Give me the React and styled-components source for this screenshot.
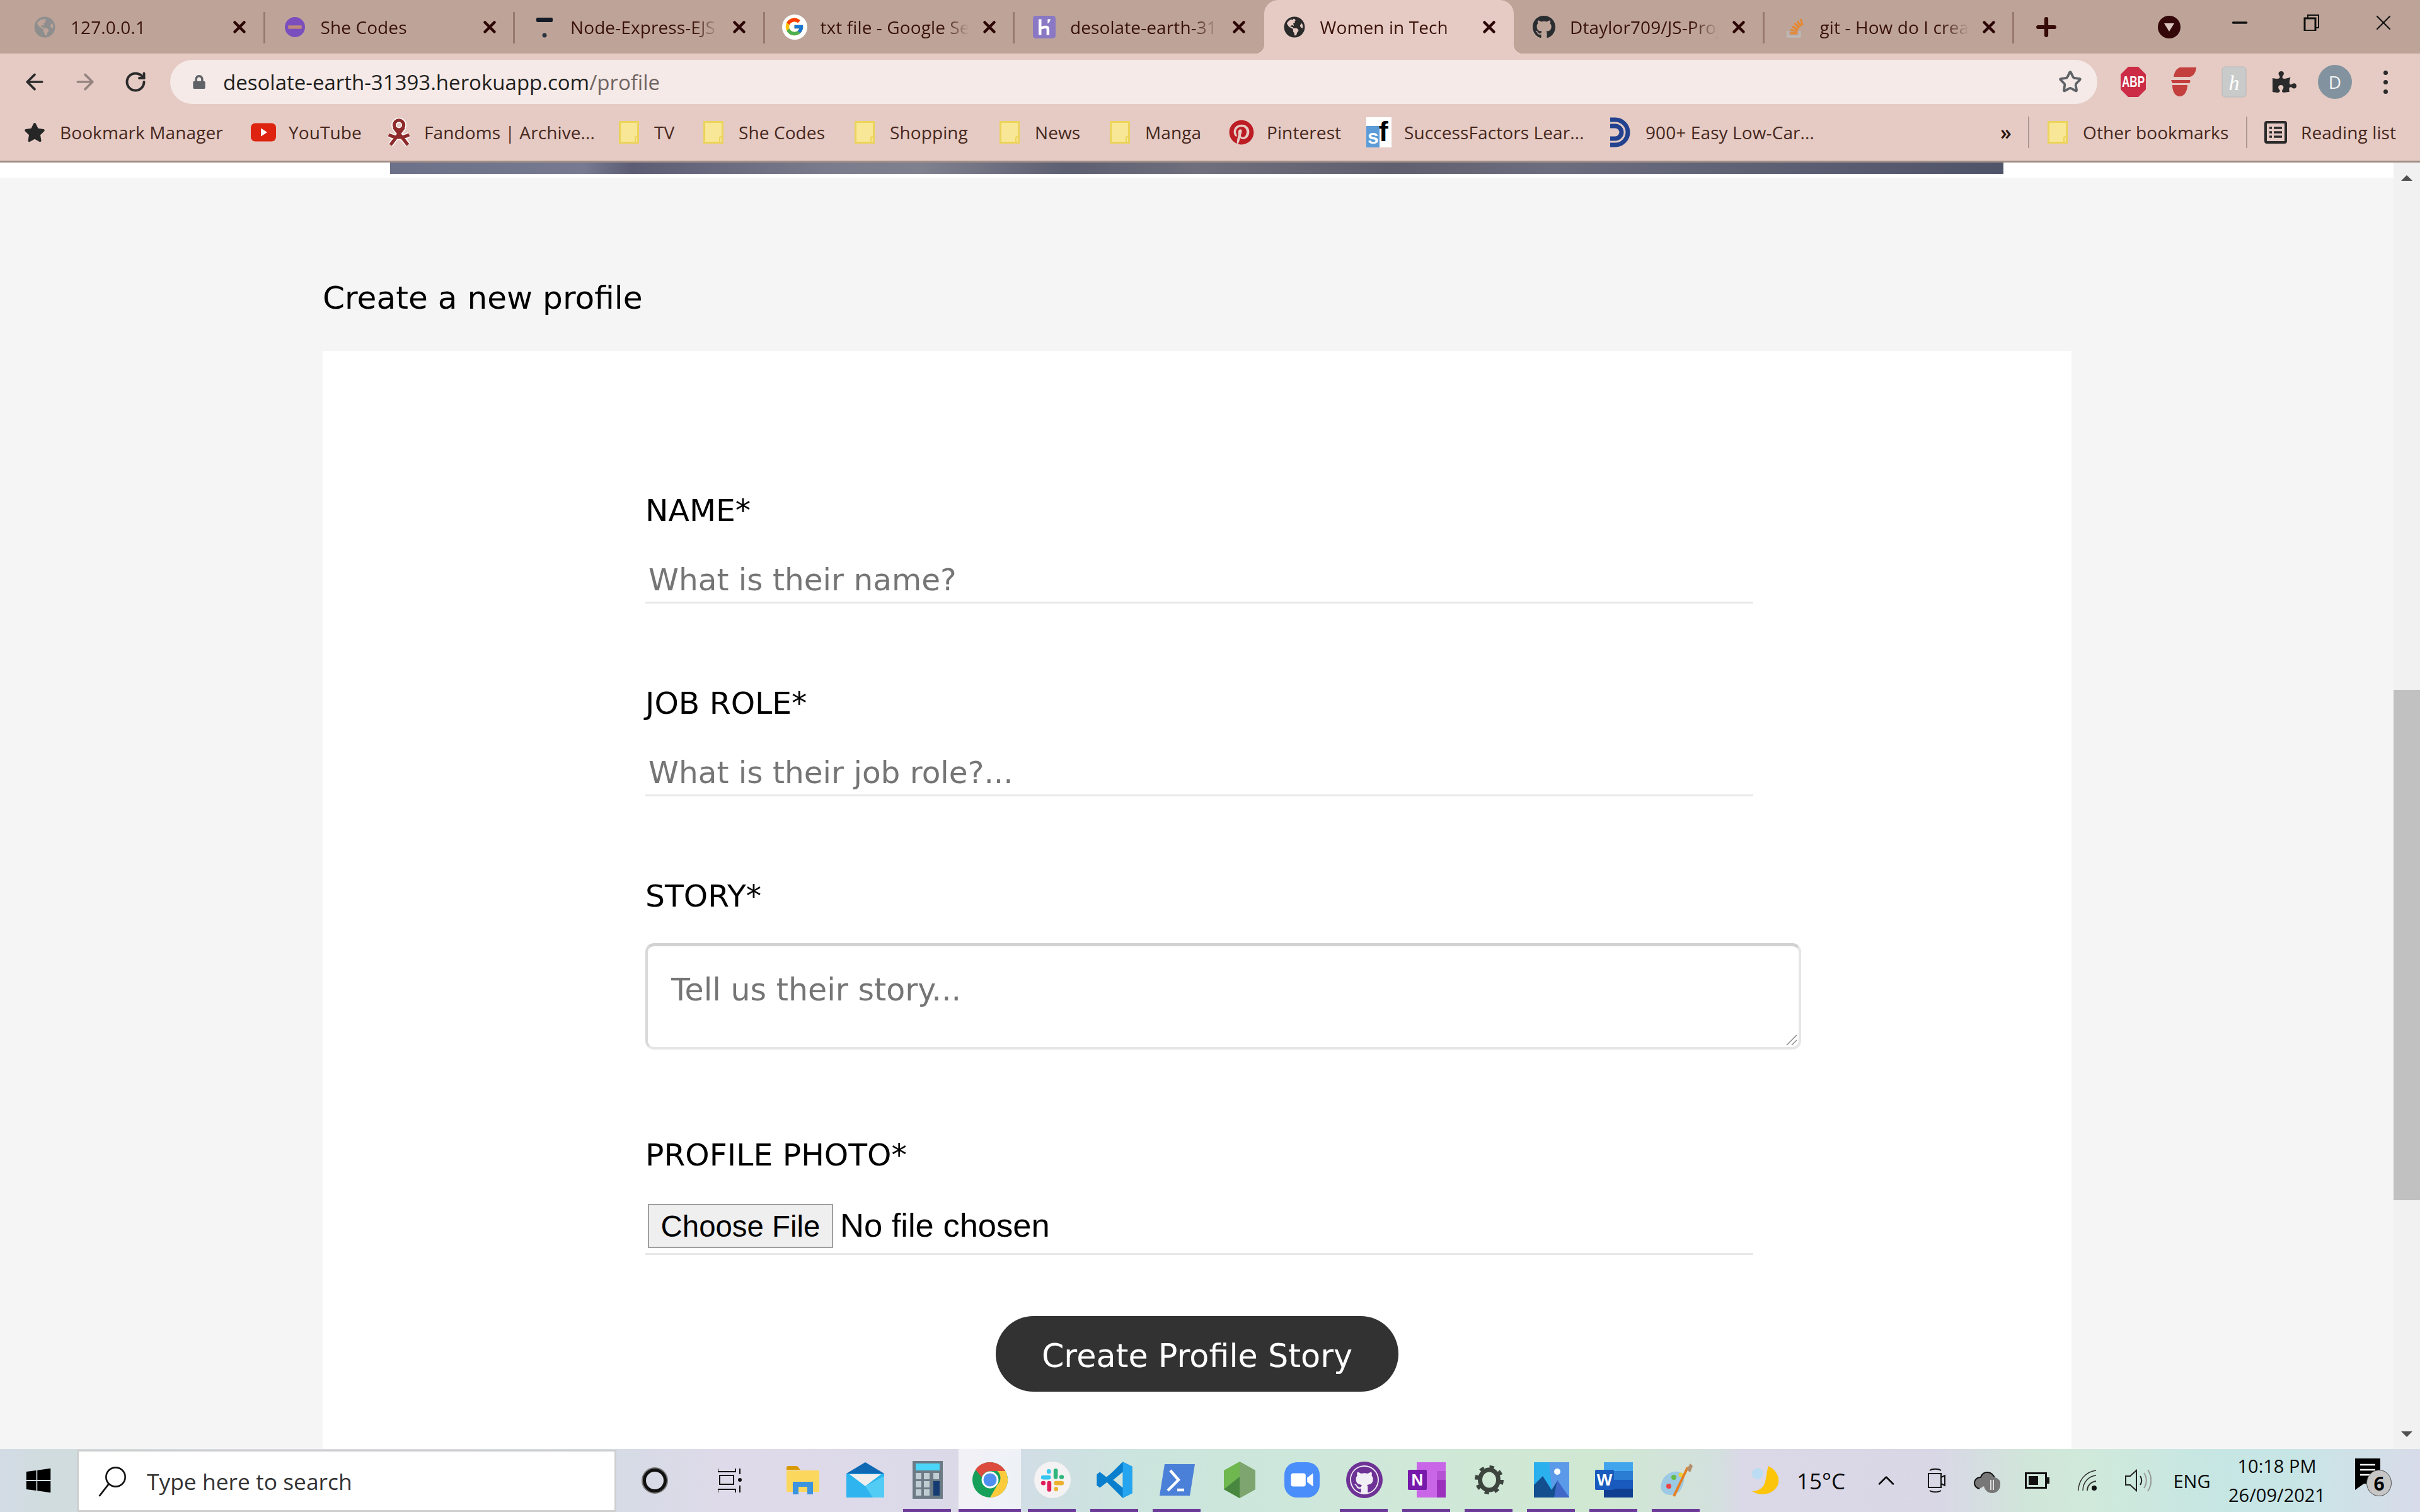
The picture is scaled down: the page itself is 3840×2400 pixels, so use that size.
import React from 'react';
import styled, { createGlobalStyle } from 'styled-components';
import { ArrowLeft, ArrowRight, RotateCw, Star, Plus, X, Minus, ChevronUp } from 'lucide-react';
import { FaGlobeAmericas, FaGithub, FaPinterest, FaWindows, FaPuzzlePiece, FaStar, FaLock } from 'react-icons/fa';
import { FcGoogle } from 'react-icons/fc';

const UI = '"Open Sans", "Liberation Sans", sans-serif';
const PAGE = '"DejaVu Sans", Verdana, sans-serif';

const Global = createGlobalStyle`
  html, body { margin: 0; padding: 0; background: #fff; }
  #root { width: 3840px; height: 2400px; overflow: hidden; }
  * { box-sizing: border-box; }
`;

const Screen = styled.div`
  width: 3840px; height: 2400px; display: flex; flex-direction: column; font-family: ${UI}; overflow: hidden;
`;
const TabStrip = styled.div`
  height: 85px; flex: none; background: #bea498; display: flex; padding-left: 23px; color: #3a1209;
`;
const Tab = styled.div`
  flex: 0 0 396.5px; height: 85px; position: relative; display: flex; align-items: center; padding-left: 30px;
  background: ${p => (p.$active ? '#e5cbc4' : 'transparent')};
  border-radius: ${p => (p.$active ? '22px 22px 0 0' : '0')};
  ${p => p.$sep && `&::after { content: ''; position: absolute; right: -1px; top: 19px; width: 3px; height: 50px; background: #98796d; }`}
  ${p => p.$active && `
    &::before { content: ''; position: absolute; left: -15px; bottom: 0; width: 15px; height: 15px; background: radial-gradient(circle at 0 0, transparent 15px, #e5cbc4 15.5px); }
    &::after { content: ''; position: absolute; right: -15px; bottom: 0; width: 15px; height: 15px; background: radial-gradient(circle at 100% 0, transparent 15px, #e5cbc4 15.5px); }
  `}
`;
const TabIcon = styled.span`
  width: 36px; height: 36px; flex: none; display: flex; align-items: center; justify-content: center;
`;
const TabTitle = styled.span`
  margin-left: 23px; width: 236px; font-size: 28px; white-space: nowrap; overflow: hidden; flex: none; line-height: 40px; letter-spacing: 0.1px;
  mask-image: linear-gradient(to right, #000 82%, transparent 100%);
`;
const TabClose = styled(X)`
  position: absolute; left: 342px; top: 28px; width: 30px; height: 30px; stroke-width: 3.6; color: #2c0505;
`;
const GoogleDisc = styled.span`
  width: 40px; height: 40px; flex: none; border-radius: 50%; background: #fff; display: flex; align-items: center; justify-content: center;
`;
const NewTab = styled.span`
  margin-left: 30px; width: 44px; height: 85px; display: flex; align-items: center; justify-content: center; color: #360a06;
`;
const StripSpacer = styled.span` width: 155px; flex: none; `;
const ProfileDot = styled.span`
  width: 36px; height: 36px; flex: none; margin-top: 25px; border-radius: 50%; background: #340808; display: flex; align-items: center; justify-content: center;
  &::after { content: ''; border-left: 8px solid transparent; border-right: 8px solid transparent; border-top: 13px solid #d9c6bf; }
`;
const WinButtons = styled.div` display: flex; margin-left: 37px; height: 72px; align-items: center; color: #111; `;
const WinButton = styled.span` width: 114px; display: flex; justify-content: center; `;

const Toolbar = styled.div`
  height: 80px; flex: none; background: #e5cbc4; display: flex; padding: 10px 0 0 15px; color: #222;
`;
const NavButton = styled.span`
  width: 80px; height: 70px; display: flex; align-items: center; justify-content: center; color: ${p => p.$dim ? '#958480' : '#2a2a2a'}; flex: none;
`;
const Omnibox = styled.div`
  width: 3058px; margin-left: 15px; height: 70px; background: #f5eae7; border-radius: 35px; display: flex; align-items: center; padding-left: 35px; flex: none;
`;
const Url = styled.span`
  margin-left: 27px; font-size: 33px; color: #1f1f1f; white-space: nowrap;
  em { font-style: normal; color: #6f6463; }
`;
const OmniStar = styled.span` margin-left: auto; margin-right: 24px; display: flex; color: #5f6368; `;
const ExtRow = styled.div` display: flex; margin-left: 17px; `;
const ExtButton = styled.span` width: 80px; height: 70px; display: flex; align-items: center; justify-content: center; flex: none; `;
const Avatar = styled.span`
  width: 54px; height: 54px; border-radius: 50%; background: #82939f; color: #f3f3f3; font-size: 28px; display: flex; align-items: center; justify-content: center;
`;
const Dots = styled.span` display: flex; flex-direction: column; gap: 8px;
  i { width: 7px; height: 7px; border-radius: 50%; background: #2a2a2a; display: block; }
`;

const BookmarkBar = styled.div`
  height: 90px; flex: none; background: #e5cbc4; display: flex; align-items: center; padding-left: 35px; border: 0;
`;
const Bookmark = styled.div`
  flex: 0 0 ${p => p.$w}px; display: flex; align-items: center; gap: 20px; font-size: 28px; color: #472820; white-space: nowrap; letter-spacing: 0.1px;
`;
const BookmarkIcon = styled.span` width: 40px; height: 48px; flex: none; display: flex; align-items: center; justify-content: center; `;
const BarSpacer = styled.span` flex: 1; `;
const Chevrons = styled.span` width: 40px; text-align: center; font-size: 32px; color: #2a1510; margin-right: 15px; line-height: 40px; font-weight: 600; `;
const BarSep = styled.span` width: 2px; height: 50px; background: #ac9791; flex: none; margin-right: ${p => p.$mr}px; `;
const ChromeEdge = styled.div` height: 3px; flex: none; background: #a08e88; `;

const Viewport = styled.div` flex: 1; display: flex; min-height: 0; `;
const Page = styled.main` flex: 1; display: flex; flex-direction: column; background: #f5f5f5; min-width: 0; font-family: ${PAGE}; `;
const HeaderBand = styled.div` height: 24px; flex: none; background: #fff; display: flex; justify-content: center; `;
const HeroStrip = styled.div`
  width: 2560px; height: 18px;
  background: linear-gradient(90deg, #6c7189 0%, #777a90 12%, #5c5d74 15%, #7a7b8c 27%, #80818f 33%, #5d5f72 42%, #6f6f7d 50%, #605f6f 62%, #6c6d7f 72%, #5e6074 85%, #505469 100%);
`;
const Heading = styled.h1`
  margin: 0 0 0 512px; padding-top: 156px; height: 275px; font-size: 50.2px; font-weight: 400; line-height: 70px; color: #000;
`;
const Card = styled.section` margin-left: 512px; width: 2775px; flex: 1; background: #fff; padding-top: 224px; overflow: hidden; `;
const Field = styled.div` margin-left: 512px; margin-bottom: ${p => p.$mb}px; `;
const Label = styled.label` display: block; font-size: 48.8px; line-height: 60px; color: #000; margin-bottom: 44px; `;
const TextInput = styled.input`
  display: block; width: 1758px; height: 73px; border: 0; border-bottom: 3px solid #e8e8e8; outline: 0; padding: 0 0 0 5px; background: #fff;
  font-family: ${PAGE}; font-size: 48.5px; color: #000;
  &::placeholder { color: #757575; opacity: 1; }
`;
const StoryBox = styled.div` position: relative; width: 1834px; height: 169px; `;
const StoryArea = styled.textarea`
  display: block; width: 100%; height: 100%; resize: none; outline: 0; overflow: hidden; padding: 41px 36px 40px 37px;
  border: 4px solid #e6e6e6; border-top: 5px solid #d2d2d2; border-left-color: #d9d9d9; border-radius: 14px; background: #fff;
  font-family: ${PAGE}; font-size: 49px; color: #000;
  &::placeholder { color: #757575; opacity: 1; }
`;
const ResizeGrip = styled.svg` position: absolute; right: 6px; bottom: 6px; width: 20px; height: 20px; `;
const FileRow = styled.div` width: 1758px; height: 84px; border-bottom: 3px solid #e8e8e8; padding: 3px 0 0 4px; `;
const FileInput = styled.input`
  font-family: "Liberation Sans", Arial, sans-serif; font-size: 52.5px; color: #000; width: 1400px; height: 70px; display: block; padding: 0;
  &::file-selector-button {
    font-family: "Liberation Sans", Arial, sans-serif; font-size: 47.4px; width: 294px; height: 70px; margin: 0 11px 0 0; padding: 0;
    background: #efefef; border: 2px solid #a0a0a0; border-radius: 0; color: #000;
  }
`;
const SubmitRow = styled.div` display: flex; justify-content: center; margin-top: 97px; `;
const Submit = styled.button`
  width: 639px; height: 120px; border: 0; border-radius: 60px; background: #323232; color: #fff; font-family: ${PAGE}; font-size: 50.8px; padding: 6px 0 0;
`;

const Scrollbar = styled.aside` width: 42px; flex: none; background: #f1f1f1; display: flex; flex-direction: column; align-items: stretch; `;
const ScrollArrow = styled.div`
  height: 48px; flex: none; display: flex; align-items: center; justify-content: center; margin-top: ${p => p.$auto ? 'auto' : '0'};
  &::after { content: ''; border-left: 9px solid transparent; border-right: 9px solid transparent; ${p => p.$down ? 'border-top: 9px solid #505050;' : 'border-bottom: 9px solid #505050;'} }
`;
const ScrollThumb = styled.div` height: 810px; flex: none; margin-top: 789px; background: #c1c1c1; `;

const Taskbar = styled.footer`
  height: 100px; flex: none; display: flex; align-items: stretch; color: #0a0a0a;
  background: linear-gradient(90deg, #d3dce6 0%, #d0dcdd 2%, #dadbe8 12%, #d8dde8 20%, #d6dbe6 26%, #dfdae9 30%, #dbd9e8 40%, #d2dde6 42%, #cbe5de 47%, #cfe8d8 58%, #d0e8d2 66%, #d3e0de 71%, #dbd8e7 72%, #d9d7e6 80%, #d0e6d9 84%, #d0e9da 86%, #c6e6e4 92%, #c8e5e6 95%, #d8dbe9 100%);
`;
const StartBtn = styled.div` width: 122px; flex: none; display: flex; align-items: center; justify-content: center; `;
const SearchBox = styled.div`
  width: 856px; flex: none; background: #fff; border: 3px solid #cfcfcf; margin: 0; display: flex; align-items: center; font-size: 35.4px; color: #333; padding-left: 26px; margin-top: 1px;
`;
const SearchText = styled.span` margin-left: 30px; `;
const Slot = styled.div` width: ${p => p.$w}px; flex: none; display: flex; align-items: center; justify-content: center; `;
const Ring = styled.span` width: 40px; height: 40px; border-radius: 50%; border: 6px solid #111; outline: 2px solid #777; outline-offset: -1px; display: block; `;
const Apps = styled.div` display: flex; margin-left: 6px; `;
const AppCell = styled.div`
  width: 99px; position: relative; display: flex; align-items: center; justify-content: center; padding-bottom: 3px;
  background: ${p => p.$active ? 'rgba(255,255,255,.62)' : 'transparent'};
  ${p => p.$run && `&::after { content: ''; position: absolute; bottom: 0; left: ${p.$active ? 0 : 11}px; right: ${p.$active ? 0 : 12}px; height: 5px; background: #6c3a99; }`}
`;
const Tray = styled.div` display: flex; margin-left: 60px; align-items: center; `;
const TrayIcon = styled.div` width: ${p => p.$w || 80}px; height: 100px; flex: none; display: flex; align-items: center; justify-content: center; font-size: ${p => p.$fs || 32}px; `;
const Temp = styled.div` width: 102px; margin-left: 22px; flex: none; font-size: 35px; `;
const Clock = styled.div` width: 180px; flex: none; height: 100px; display: flex; flex-direction: column; align-items: center; justify-content: center; font-size: 29px; line-height: 46px; `;
const NoteWrap = styled.div` position: relative; width: 60px; height: 70px; margin-left: 34px; `;
const NoteBadge = styled.span`
  position: absolute; left: 18px; top: 18px; width: 40px; height: 42px; border-radius: 50%; background: #c6c6c6; border: 1px solid #555; color: #000; font-size: 30px; font-weight: 700; display: flex; align-items: center; justify-content: center;
`;

const S = ({ w, h = w, vb = '0 0 24 24', children }) => <svg width={w} height={h} viewBox={vb}>{children}</svg>;

const Folder = () => (
  <S w={32} h={36} vb="0 0 32 36"><path d="M1.500 1.500H30.500V34.500H1.500Z" fill="#f7e796" stroke="#ecd35a" strokeWidth="3" /><path d="M26 34V27a2 2 0 014 0v7" fill="none" stroke="#ecd35a" strokeWidth="2" /></S>
);
const SheCodes = () => (
  <S w={32}><circle cx="12" cy="12" r="12" fill="#7a4fbd" /><rect x="4" y="10" width="16" height="4" fill="#c08a78" /></S>
);
const NodeExpress = () => (
  <S w={30} h={36} vb="0 0 30 36"><rect x="2" y="3" width="26" height="7" rx="2" fill="#141b26" /><circle cx="15" cy="31" r="3.500" fill="#2a3340" /></S>
);
const HerokuTile = () => (
  <S w={40} vb="0 0 40 40">
    <rect width="40" height="40" rx="5" fill="#8a78c4" />
    <path d="M10 6h5v13c4-1.500 8-2 11-1 2 1 3 3 3 5v11h-5V23c-2-1-6 0-9 1v10h-5Z" fill="#fff" />
    <path d="M26 6h5c-.5 3-2 6-5 8Z" fill="#fff" />
  </S>
);
const SO = ({ size = 36 }) => (
  <S w={size}>
    <path d="M5 16v6h13v-6" fill="none" stroke="#bcbbbb" strokeWidth="2" />
    <g stroke="#e8862c" strokeWidth="2"><path d="M8 18.500h7M8.500 15l7 1.200M9.800 11.400l6.400 3M12.200 8l5.400 4.500M15.200 5.500l4 5.600M18.800 3.500l2 6.600" /></g>
  </S>
);
const AO3 = () => (
  <S w={42} h={50} vb="0 0 42 50">
    <g fill="none" stroke="#fff" strokeWidth="9"><circle cx="21" cy="13" r="8" /><path d="M7 46L29 17M36 46L13 17M4 29c12 6 22 6 34 0" /></g>
    <g fill="none" stroke="#8e2a2a" strokeWidth="5.500"><circle cx="21" cy="13" r="8" /><path d="M7 46L29 17M36 46L13 17M4 29c12 6 22 6 34 0" /></g>
  </S>
);
const YT = () => (
  <S w={40} h={30} vb="0 0 40 30"><rect width="40" height="29" y=".5" rx="7" fill="#de2411" /><path d="M16 8.500L26 15 16 21.500Z" fill="#fff" /></S>
);
const SF = () => (
  <S w={40} h={48} vb="0 0 40 48">
    <rect width="40" height="48" fill="#fff" /><rect y="14" width="21" height="34" fill="#5a9bd8" />
    <text x="2" y="42" fontSize="32" fontWeight="700" fill="#fff" fontFamily="Liberation Sans">s</text>
    <text x="20" y="38" fontSize="44" fontWeight="700" fill="#000" fontFamily="Liberation Sans">f</text>
  </S>
);
const DD = () => (
  <S w={32} h={48} vb="0 0 32 48">
    <path d="M0 4H8a20 20 0 010 40H0" fill="none" stroke="#22418f" strokeWidth="7" /><path d="M0 14H8a10 10 0 010 20H0" fill="none" stroke="#22418f" strokeWidth="7" /></S>
);
const ABP = () => (
  <S w={40} h={50} vb="0 0 40 50">
    <path d="M12 1h16l12 12v24L28 49H12L0 37V13Z" fill="#cc2c46" />
    <text x="20" y="33" textAnchor="middle" fontSize="24" fontWeight="700" fill="#fff" fontFamily="Liberation Sans" textLength="36" lengthAdjust="spacingAndGlyphs">ABP</text>
  </S>
);
const Express = () => (
  <S w={40} h={46} vb="0 0 40 46">
    <path d="M14 0h26c0 6-4 14-10 15H4C5 8 8 2 14 0Z" fill="#c4403f" /><path d="M0 20h30c1 2 0 4-1 5H2Z" fill="#c4403f" /><path d="M2 28h24c0 8-4 18-12 18C6 46 2 38 2 28Z" fill="#c4403f" />
  </S>
);
const HExt = () => (
  <S w={40} h={50} vb="0 0 40 50">
    <rect x="1" y="1" width="38" height="48" rx="5" fill="#c9cbcb" stroke="#b8b8b8" />
    <text x="20" y="38" textAnchor="middle" fontSize="34" fontStyle="italic" fill="#fff" fontFamily="Liberation Serif">h</text>
  </S>
);
const RestoreIcon = () => (
  <S w={26} vb="0 0 26 26"><path d="M7 6V1h17v20h-5" fill="none" stroke="#111" strokeWidth="2" /><rect x="2" y="6" width="17" height="20" fill="none" stroke="#111" strokeWidth="3" /></S>
);
const ReadingList = () => (
  <S w={36} h={36} vb="0 0 36 36"><rect x="2" y="2" width="32" height="32" rx="2" fill="none" stroke="#2a2a2a" strokeWidth="4" /><path d="M8 11h4M15 11h13M8 18h4M15 18h13M8 25h4M15 25h13" stroke="#2a2a2a" strokeWidth="3.500" /></S>
);
const TaskView = () => (
  <S w={40} h={40} vb="0 0 40 40"><g fill="none" stroke="#111" strokeWidth="2"><path d="M0 1v5h28V1M3 12h22v14H3ZM0 39v-5h28v5" /><path d="M35 1v9M35 28v11" /></g><circle cx="35" cy="19" r="3" fill="#111" /></S>
);
const Explorer = () => (
  <S w={52} h={46} vb="0 0 52 46"><path d="M0 4a3 3 0 013-3h14l5 6h-22Z" fill="#d99a00" /><path d="M0 8h52v34H0Z" fill="#fcd75d" /><path d="M10 46V26h32v20h-9V34H19v12Z" fill="#3c94e0" /></S>
);
const Mail = () => (
  <S w={60} h={56} vb="0 0 60 56"><path d="M0 18L30 0 60 18v6H0Z" fill="#0f68b4" /><path d="M0 18h60v38H0Z" fill="#29b6f0" /><path d="M0 22L30 40 60 22V56H0Z" fill="#2fb4ef" /><path d="M5 19h50L30 38Z" fill="#f1eeee" /><path d="M30 38L60 22V56H42Z" fill="#53ccf5" /></S>
);
const Calc = () => (
  <S w={48} h={60} vb="0 0 48 60">
    <rect width="48" height="60" fill="#6b7a84" /><rect x="5" y="4" width="38" height="11" fill="#4ad6f9" />
    {[19, 32, 45].map(y => [5, 18, 33].map(x => (x === 33 && y > 19 ? null : <rect key={x + '-' + y} x={x} y={y} width="9" height="10" fill="#c0ced3" />)))}
    <rect x="33" y="32" width="10" height="23" fill="#143c72" />
  </S>
);
const ChromeIcon = () => (
  <S w={56} vb="0 0 48 48">
    <circle cx="24" cy="24" r="24" fill="#16a05a" />
    <path d="M24 0a24 24 0 0120.800 12H24a12 12 0 00-11.400 8.400L4.200 10A24 24 0 0124 0Z" fill="#dc4b3e" />
    <path d="M44.800 12A24 24 0 0124 48l10.400-18a12 12 0 00-.6-18Z" fill="#fbcb3b" />
    <circle cx="24" cy="24" r="11.500" fill="#fff" /><circle cx="24" cy="24" r="9" fill="#4f8ff0" />
  </S>
);
const Slack = () => (
  <S w={58} vb="0 0 48 48">
    <circle cx="24" cy="24" r="24" fill="#f4f2f2" />
    <rect x="9" y="18" width="13" height="5.500" rx="2.750" fill="#36c5f0" /><rect x="16.500" y="10" width="5.500" height="6" rx="2.750" fill="#36c5f0" />
    <rect x="25.500" y="9" width="5.500" height="14" rx="2.750" fill="#2eb67d" /><rect x="33" y="17.500" width="6" height="5.500" rx="2.750" fill="#2eb67d" />
    <rect x="26" y="25.500" width="13" height="5.500" rx="2.750" fill="#ecb22e" /><rect x="26" y="33" width="5.500" height="6" rx="2.750" fill="#ecb22e" />
    <rect x="17" y="25.500" width="5.500" height="14" rx="2.750" fill="#e01e5a" /><rect x="9" y="25.500" width="6" height="5.500" rx="2.750" fill="#e01e5a" />
  </S>
);
const VSCode = () => (
  <S w={60} vb="0 0 48 48">
    <path d="M34 1l12 6v34l-12 6-20-20-9 7-4-3v-14l4-3 9 7Z" fill="#0a7fce" /><path d="M34 1l12 6v34l-12 6Z" fill="#25a5ef" /><path d="M14 27l20-14v-9L5 27Z" fill="#0a7fce" /><path d="M34 14L22 24l12 10Z" fill="#cfe5dd" />
  </S>
);
const PS = () => (
  <S w={56} h={50} vb="0 0 56 50"><path d="M8 0h48l-8 50H0Z" fill="#4a80d8" /><path d="M17 10l13 15-17 17" fill="none" stroke="#fff" strokeWidth="4.500" /><path d="M28 41h11" stroke="#fff" strokeWidth="4.500" /></S>
);
const NodeIcon = () => (
  <S w={50} h={58} vb="0 0 50 58"><path d="M25 0L50 14v30L25 58 0 44V14Z" fill="#6fb74f" /><path d="M25 0L50 14v30L25 58Z" fill="#7ea56f" /><path d="M0 44l25-20v34Z" fill="#47873f" /></S>
);
const ZoomIcon = () => (
  <S w={56} vb="0 0 48 48"><rect width="48" height="48" rx="17" fill="#4a8efc" /><rect x="9" y="15" width="20" height="18" rx="3" fill="#fff" /><path d="M31 21l8-6v18l-8-6Z" fill="#fff" /></S>
);
const GHub = () => (
  <S w={58} vb="0 0 48 48">
    <circle cx="24" cy="24" r="24" fill="#6e3296" /><circle cx="24" cy="24" r="19" fill="#f2eef5" />
    <g transform="translate(6 6) scale(1.500)"><FaGithub size={24} color="#6e3296" /></g>
  </S>
);
const OneNote = () => (
  <S w={60} h={56} vb="0 0 60 56">
    <rect x="14" width="46" height="56" fill="#c966e8" /><rect x="46" y="14" width="14" height="42" fill="#9b30bd" /><rect x="46" y="14" width="14" height="14" fill="#b552d4" />
    <rect y="12" width="30" height="32" rx="2" fill="#7719aa" /><text x="15" y="37" textAnchor="middle" fontSize="26" fontWeight="700" fill="#fff" fontFamily="Liberation Sans">N</text>
  </S>
);
const Gear = () => (
  <S w={48} h={52} vb="0 0 48 52">
    <ellipse cx="24" cy="26" rx="14.500" ry="16" fill="none" stroke="#3d453f" strokeWidth="7" />
    <circle cx="24" cy="26" r="20" fill="none" stroke="#3d453f" strokeWidth="6" strokeDasharray="7 8.700" />
  </S>
);
const Photos = () => (
  <S w={56} vb="0 0 56 56"><rect width="56" height="56" fill="#2bb0ee" /><path d="M24 0h32v56H30Z" fill="#5b9ae8" /><circle cx="37" cy="15" r="5" fill="#fff" /><path d="M0 56V36L14 22l14 22 9-14 19 26Z" fill="#134f8e" /><path d="M37 28l19 28H32Z" fill="#4068c8" /></S>
);
const Word = () => (
  <S w={60} h={56} vb="0 0 60 56">
    <rect x="14" width="46" height="14" fill="#41a5ee" /><rect x="14" y="14" width="46" height="14" fill="#2b7cd3" /><rect x="14" y="28" width="46" height="14" fill="#185abd" /><rect x="14" y="42" width="46" height="14" fill="#103f91" />
    <rect y="12" width="30" height="32" rx="2" fill="#185abd" /><text x="15" y="37" textAnchor="middle" fontSize="26" fontWeight="700" fill="#fff" fontFamily="Liberation Sans">W</text>
  </S>
);
const Paint = () => (
  <S w={56} h={56} vb="0 0 56 56">
    <path d="M4 34c4-16 20-22 30-18 8 4 8 14 2 26-6 10-18 12-26 8C4 46 2 40 4 34Z" fill="#9cc9e4" />
    <circle cx="16" cy="38" r="4" fill="#e44" /><circle cx="24" cy="24" r="4" fill="#6b4" /><circle cx="35" cy="20" r="3.500" fill="#ec3" />
    <path d="M24 54L46 8" stroke="#e77d1f" strokeWidth="4" /><path d="M44 12l6-10 4 4-4 10Z" fill="#b58f6b" />
  </S>
);
const Moon = () => (
  <S w={50} h={46} vb="0 0 50 46"><path d="M32 0c14 6 20 22 14 32-7 13-26 17-40 8 9 0 17-4 20-12 3-9 3-19 6-28Z" fill="#fdc50a" /><ellipse cx="15" cy="12" rx="9" ry="9" fill="#bcdcf4" /></S>
);
const Meet = () => (
  <S w={30} h={40} vb="0 0 30 40"><g fill="none" stroke="#111" strokeWidth="2"><path d="M4 4c4-3 14-3 18 0M4 36c4 3 14 3 18 0" /><rect x="2" y="9" width="20" height="22" /><path d="M22 15l6-3v16l-6-3" /></g></S>
);
const Cloud = () => (
  <S w={44} h={42} vb="0 0 44 42"><path d="M10 34a9 9 0 012-18c3-12 20-10 22 2 4 0 8 3 8 8H24" fill="#777" stroke="#111" strokeWidth="2" /><circle cx="30" cy="28" r="13" fill="#777" /><path d="M28 20v16M32 20v16" stroke="#fff" strokeWidth="1.500" /></S>
);
const Battery = () => (
  <S w={40} h={26} vb="0 0 40 26"><rect x="1.500" y="1.500" width="32" height="23" fill="none" stroke="#111" strokeWidth="3" /><rect x="6" y="6" width="15" height="14" fill="#111" /><rect x="35" y="8" width="4" height="10" fill="#111" /></S>
);
const Wifi = () => (
  <S w={34} h={34} vb="0 0 34 34"><g fill="none"><path d="M2 33C2 16 14 3 30 1M9 33C9 20 18 10 30 9" stroke="#333" strokeWidth="1.500" /><path d="M16 33c0-8 6-14 14-15" stroke="#333" strokeWidth="2" /></g><circle cx="27" cy="29" r="4" fill="#111" /></S>
);
const Speaker = () => (
  <S w={42} h={40} vb="0 0 42 40"><path d="M1 13h7l10-9v32L8 27H1Z" fill="none" stroke="#222" strokeWidth="2" /><path d="M24 13c3 4 3 10 0 14" fill="none" stroke="#222" strokeWidth="2" /><path d="M30 8c5 7 5 17 0 24M36 3c7 10 7 24 0 34" fill="none" stroke="#999" strokeWidth="2" /></S>
);

const tabs = [
  { t: '127.0.0.1', i: <FaGlobeAmericas size={34} color="#8e8e8e" />, sep: 1 },
  { t: 'She Codes', i: <SheCodes />, sep: 1 },
  { t: 'Node-Express-EJS', i: <NodeExpress />, sep: 1 },
  { t: 'txt file - Google Search', i: <GoogleDisc><FcGoogle size={33} /></GoogleDisc>, sep: 1 },
  { t: 'desolate-earth-31393', i: <HerokuTile /> },
  { t: 'Women in Tech', i: <FaGlobeAmericas size={34} color="#2a2a2a" />, active: 1 },
  { t: 'Dtaylor709/JS-Project', i: <FaGithub size={40} color="#2a2d30" />, sep: 1 },
  { t: 'git - How do I create', i: <SO />, sep: 1 },
];

const marks = [
  ['Bookmark Manager', <FaStar size={34} color="#262626" />, 363],
  ['YouTube', <YT />, 215],
  ['Fandoms | Archive...', <AO3 />, 365],
  ['TV', <Folder />, 134],
  ['She Codes', <Folder />, 240],
  ['Shopping', <Folder />, 230],
  ['News', <Folder />, 175],
  ['Manga', <Folder />, 193],
  ['Pinterest', <FaPinterest size={40} color="#bd1c24" />, 218],
  ['SuccessFactors Lear...', <SF />, 383],
  ['900+ Easy Low-Car...', <DD />, 360],
];

const apps = [
  [<Explorer />, 0], [<Mail />, 0], [<Calc />, 1], [<ChromeIcon />, 1, 1], [<Slack />, 1], [<VSCode />, 1], [<PS />, 1],
  [<NodeIcon />, 0], [<ZoomIcon />, 0], [<GHub />, 1], [<OneNote />, 1], [<Gear />, 1], [<Photos />, 1], [<Word />, 1], [<Paint />, 1],
];

export default function App() {
  return (
    <Screen>
      <Global />
      <TabStrip>
        {tabs.map(x => (
          <Tab key={x.t} $sep={x.sep} $active={x.active}>
            <TabIcon>{x.i}</TabIcon>
            <TabTitle>{x.t}</TabTitle>
            <TabClose />
          </Tab>
        ))}
        <NewTab><Plus size={46} strokeWidth={3.4} /></NewTab>
        <StripSpacer />
        <ProfileDot />
        <WinButtons>
          <WinButton><Minus size={36} strokeWidth={2.4} /></WinButton>
          <WinButton><RestoreIcon /></WinButton>
          <WinButton><X size={40} strokeWidth={1.3} /></WinButton>
        </WinButtons>
      </TabStrip>
      <Toolbar>
        <NavButton><ArrowLeft size={40} strokeWidth={2.2} /></NavButton>
        <NavButton $dim><ArrowRight size={40} strokeWidth={2.2} /></NavButton>
        <NavButton><RotateCw size={36} strokeWidth={2.6} /></NavButton>
        <Omnibox>
          <FaLock size={22} color="#5f6368" />
          <Url>desolate-earth-31393.herokuapp.com<em>/profile</em></Url>
          <OmniStar><Star size={38} strokeWidth={2.4} /></OmniStar>
        </Omnibox>
        <ExtRow>
          <ExtButton><ABP /></ExtButton>
          <ExtButton><Express /></ExtButton>
          <ExtButton><HExt /></ExtButton>
          <ExtButton><FaPuzzlePiece size={38} color="#2a2a2a" /></ExtButton>
          <ExtButton><Avatar>D</Avatar></ExtButton>
          <ExtButton><Dots><i /><i /><i /></Dots></ExtButton>
        </ExtRow>
      </Toolbar>
      <BookmarkBar>
        {marks.map(([t, icon, w]) => (
          <Bookmark key={t} $w={w}><BookmarkIcon>{icon}</BookmarkIcon>{t}</Bookmark>
        ))}
        <BarSpacer />
        <Chevrons>»</Chevrons>
        <BarSep $mr={25} />
        <Bookmark $w={319}><BookmarkIcon><Folder /></BookmarkIcon>Other bookmarks</Bookmark>
        <BarSep $mr={25} />
        <Bookmark $w={249}><BookmarkIcon><ReadingList /></BookmarkIcon>Reading list</Bookmark>
      </BookmarkBar>
      <ChromeEdge />
      <Viewport>
        <Page>
          <HeaderBand><HeroStrip /></HeaderBand>
          <Heading>Create a new profile</Heading>
          <Card>
            <Field $mb={129}>
              <Label>NAME*</Label>
              <TextInput placeholder="What is their name?" />
            </Field>
            <Field $mb={129}>
              <Label>JOB ROLE*</Label>
              <TextInput placeholder="What is their job role?..." />
            </Field>
            <Field $mb={138}>
              <Label>STORY*</Label>
              <StoryBox>
                <StoryArea placeholder="Tell us their story..." />
                <ResizeGrip viewBox="0 0 20 20"><path d="M19 3L3 19M19 11l-8 8" stroke="#8a8a8a" strokeWidth="1.5" /></ResizeGrip>
              </StoryBox>
            </Field>
            <Field $mb={0}>
              <Label>PROFILE PHOTO*</Label>
              <FileRow><FileInput type="file" /></FileRow>
            </Field>
            <SubmitRow><Submit type="button">Create Profile Story</Submit></SubmitRow>
          </Card>
        </Page>
        <Scrollbar>
          <ScrollArrow />
          <ScrollThumb />
          <ScrollArrow $down $auto />
        </Scrollbar>
      </Viewport>
      <Taskbar>
        <StartBtn><FaWindows size={44} color="#000" /></StartBtn>
        <SearchBox>
          <svg width="52" height="52" viewBox="0 0 24 24" fill="none" stroke="#111" strokeWidth="1.2"><circle cx="15" cy="9" r="7" /><path d="M10 14L3 23" /></svg>
          <SearchText>Type here to search</SearchText>
        </SearchBox>
        <Slot $w={122}><Ring /></Slot>
        <Slot $w={118}><TaskView /></Slot>
        <Apps>
          {apps.map(([icon, run, active], i) => (
            <AppCell key={i} $run={run} $active={active}>{icon}</AppCell>
          ))}
        </Apps>
        <Tray>
          <TrayIcon $w={60}><Moon /></TrayIcon>
          <Temp>15°C</Temp>
          <TrayIcon><ChevronUp size={44} strokeWidth={1.4} /></TrayIcon>
          <TrayIcon><Meet /></TrayIcon>
          <TrayIcon><Cloud /></TrayIcon>
          <TrayIcon><Battery /></TrayIcon>
          <TrayIcon><Wifi /></TrayIcon>
          <TrayIcon><Speaker /></TrayIcon>
          <TrayIcon $w={90} $fs={29}>ENG</TrayIcon>
          <Clock><span>10:18 PM</span><span>26/09/2021</span></Clock>
          <NoteWrap>
            <svg width="40" height="50" viewBox="0 0 40 50"><path d="M0 0h40v40H14L0 50Z" fill="#000" /><path d="M8 10h24M8 18h24M8 26h24" stroke="#fff" strokeWidth="2.5" /></svg>
            <NoteBadge>6</NoteBadge>
          </NoteWrap>
        </Tray>
      </Taskbar>
    </Screen>
  );
}
